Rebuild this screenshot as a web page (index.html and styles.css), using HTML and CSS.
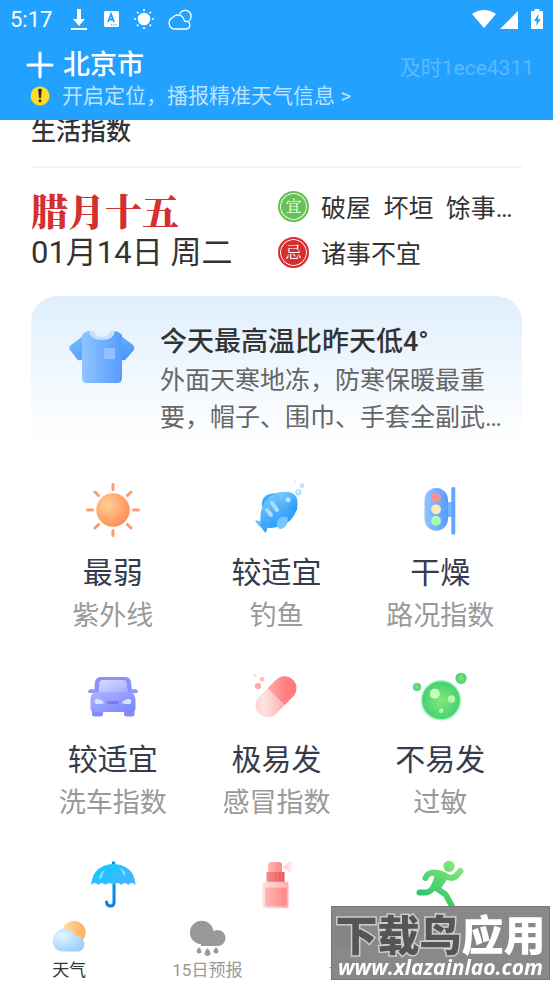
FILE: index.html
```html
<!DOCTYPE html>
<html lang="zh-CN">
<head>
<meta charset="UTF-8">
<meta name="viewport" content="width=device-width, initial-scale=1.0">
<title>北京市</title>
<link rel="stylesheet" href="styles.css">
</head>
<body>

<header class="top">
  <div class="status">
    <span class="time">5:17</span>
    <svg width="20" height="24" viewBox="0 0 20 24" fill="#fff"><path d="M8 1h4v10h4l-6 7-6-7h4zM2 20h16v2H2z"/></svg>
    <svg width="18" height="24" viewBox="0 0 18 24"><rect x="2" y="3" width="15" height="16" rx="1.500" fill="#fff"/><path d="M6 14l3-8 3 8M7 11.500h4" fill="none" stroke="#22a1ff" stroke-width="1.800"/><path d="M9 16.800h1.200m1 0h1.200m1 0h1.200" stroke="#22a1ff"/></svg>
    <svg width="22" height="24" viewBox="0 0 22 24"><circle cx="11" cy="11" r="6.300" fill="#fff"/><path d="M11 1v2M11 19v2M1 11h2M19 11h2M4 4l1.400 1.400M16.600 16.600L18 18M4 18l1.400-1.400M16.600 5.400L18 4" stroke="#fff" stroke-width="1.600"/></svg>
    <svg width="24" height="24" viewBox="0 0 24 24" fill="none" stroke="#fff" stroke-width="1.300"><path d="M6 21a6 6 0 0 1-1.500-11.300 6.500 6.500 0 0 1 11.500 2q1 3 2 1.500a4 4 0 0 1 1 7.800z"/><path d="M11.500 6.500a6 6 0 1 1 9.500 6.500"/></svg>
    <span class="space"></span>
    <svg width="24" height="24" viewBox="0 0 24 24" fill="#fff"><path d="M0 6Q12-2 24 6L12 20z"/></svg>
    <svg width="18" height="24" viewBox="0 0 18 24" fill="#fff"><path d="M18 3v18H0z"/></svg>
    <svg class="battery" width="12" height="24" viewBox="0 0 12 24"><path d="M3.500 1h5v2H11q1 0 1 1v16q0 1-1 1H1q-1 0-1-1V4q0-1 1-1h2.500z" fill="#fff"/><path d="M7.500 6L3 13h2.500v5L9.500 11H7z" fill="#22a1ff"/></svg>
  </div>
  <div class="place">
    <button class="city">
      <svg width="28" height="28" viewBox="0 0 28 28"><path d="M14 2v24M2 14h24" stroke="#fff" stroke-width="3" stroke-linecap="round"/></svg>
      北京市
    </button>
    <span class="user">及时1ece4311</span>
  </div>
  <a class="tip" href="#">
    <svg width="20" height="20" viewBox="0 0 20 20"><circle cx="10" cy="10" r="9.500" fill="#ffdc26"/><path d="M8.200 4.300a1.800 1.800 0 0 1 3.600 0L11 12H9z" fill="#333"/><circle cx="10" cy="14.800" r="1.500" fill="#333"/></svg>
    开启定位，播报精准天气信息 &gt;
  </a>
</header>

<main>
  <h1>生活指数</h1>

  <section class="almanac">
    <div>
      <div class="lunar">腊月十五</div>
      <div class="date">01月14日 周二</div>
    </div>
    <ul class="advice">
      <li><span class="seal good">宜</span>破屋&nbsp; 坏垣&nbsp; 馀事…</li>
      <li><span class="seal bad">忌</span>诸事不宜</li>
    </ul>
  </section>

  <section class="clothes">
    <svg width="66" height="56" viewBox="0 0 66 56">
      <defs>
        <linearGradient id="shirt"><stop offset="0" stop-color="#90c5ff"/><stop offset="1" stop-color="#579bff"/></linearGradient>
        <linearGradient id="sleeve" x2=".6" y2="1"><stop offset="0" stop-color="#7cc5ff"/><stop offset="1" stop-color="#4c99fc"/></linearGradient>
      </defs>
      <path d="M19 2L2 15q-3 2-1 5l7 9q1 2 4 1l6-4zM47 2l17 13q2 2 1 5l-8 9q-1 2-4 1l-6-4z" fill="url(#sleeve)"/>
      <path d="M13 5q4-4 8-4h24q4 0 8 4v43q0 5-5 5H18q-5 0-5-5z" fill="url(#shirt)"/>
      <path d="M20 1h26q-1 9-13 9T20 1z" fill="#c4defe"/>
      <path d="M24 1h18q-3 6-9 6t-9-6z" fill="#e5f1fd"/>
      <rect x="35" y="18" width="11" height="11" rx="1" fill="#8fc1ff"/>
    </svg>
    <div>
      <h2>今天最高温比昨天低4°</h2>
      <p>外面天寒地冻，防寒保暖最重要，帽子、围巾、手套全副武…</p>
    </div>
  </section>

  <section class="indexes">
    <div class="index">
      <svg width="60" height="60" viewBox="0 0 60 60">
        <defs><radialGradient id="sun" cx=".35" cy=".35" r=".7"><stop offset="0" stop-color="#ffd196"/><stop offset="1" stop-color="#ff8d55"/></radialGradient></defs>
        <circle cx="30" cy="30" r="16.700" fill="url(#sun)"/>
        <path d="M30 4.500v5M30 50.500v5M4.500 30h5M50.500 30h5M12 12l3.500 3.500M44.500 44.500L48 48M12 48l3.500-3.500M44.500 15.500L48 12" stroke="#fb9c6c" stroke-width="3" stroke-linecap="round"/>
      </svg>
      <h3>最弱</h3>
      <p>紫外线</p>
    </div>
    <div class="index">
      <svg width="60" height="60" viewBox="0 0 60 60">
        <defs>
          <linearGradient id="fish" x1=".2" x2=".8" y2="1"><stop offset="0" stop-color="#7dccfe"/><stop offset="1" stop-color="#1c91fa"/></linearGradient>
          <linearGradient id="fin" y2="1"><stop offset="0" stop-color="#7fd0ff"/><stop offset="1" stop-color="#2492f7"/></linearGradient>
        </defs>
        <path d="M16 27Q14 14 30 13l-9 11z" fill="#3ba8fb"/>
        <path d="M20 43Q14 41 9.500 40q-1 2 6 8l4 5q2-3 2-8z" fill="url(#fin)"/>
        <path d="M15 45C12 28 20 14 35 12q12-1 15 5C55 32 44 47 25 48q-8 0-10-3z" fill="url(#fish)"/>
        <path d="M33 12.300Q34 30 50.500 31q2-7 0-14-4-6-17.500-4.700z" fill="url(#fin)"/>
        <circle cx="42" cy="19.700" r="2.500" fill="#b8e7ff"/>
        <path d="M26 23l5 7M21 30l4 5" stroke="#a9dcff" stroke-width="4" stroke-linecap="round"/>
        <path d="M31 46q-1-8 5-9 6-1 6 2-1 9-7 10-3 0-4-3z" fill="#76c5fd"/>
        <circle cx="49" cy="1.800" r="1.600" fill="#dff4ff"/><circle cx="56" cy="5.500" r="2.500" fill="#bfe5ff"/><circle cx="52.300" cy="12.300" r="3.100" fill="#b1e0ff"/><circle cx="52" cy="12" r="1.200" fill="#e8f7ff"/>
      </svg>
      <h3>较适宜</h3>
      <p>钓鱼</p>
    </div>
    <div class="index">
      <svg width="60" height="60" viewBox="0 0 60 60">
        <rect x="36" y="22" width="7" height="15" fill="#77b5ff"/>
        <rect x="41.300" y="7" width="4" height="47.500" rx="1.500" fill="#62a7ff"/>
        <rect x="14.500" y="8" width="23.500" height="42.700" rx="11.700" fill="url(#shirt)"/>
        <circle cx="26" cy="17.700" r="4.900" fill="#fd8f8f"/><circle cx="26" cy="29.300" r="4.900" fill="#ffebb5"/><circle cx="26" cy="40.700" r="4.900" fill="#a6ffb0"/>
      </svg>
      <h3>干燥</h3>
      <p>路况指数</p>
    </div>
    <div class="index">
      <svg width="60" height="60" viewBox="0 0 60 60">
        <defs>
          <linearGradient id="car" x2="1" y2="1"><stop offset="0" stop-color="#aeb5ff"/><stop offset="1" stop-color="#7a83ff"/></linearGradient>
          <linearGradient id="glass" x2="1" y2="1"><stop offset="0" stop-color="#dcdfff"/><stop offset="1" stop-color="#a4abff"/></linearGradient>
        </defs>
        <path d="M9 40h11v7q0 2.500-3 2.500h-5q-3 0-3-2.500zM41 40h10.500v7q0 2.500-3 2.500h-4.500q-3 0-3-2.500z" fill="#8388fb"/>
        <path d="M11 26l1-11q1-5 6-5h24q5 0 6 5l1 11z" fill="#8a91fe"/>
        <path d="M5 25q0-3 4-3l4 1v3H6zM55 25q0-3-4-3l-4 1v3h7z" fill="#9097fd"/>
        <path d="M12 25h36q4 2 4.500 7v9q0 4-4 4h-37q-4 0-4-4v-9q0-5 4.500-7z" fill="url(#car)"/>
        <path d="M15.500 25l1-9q.500-3 3.500-3h20q3 0 3.500 3l1.500 9z" fill="url(#glass)"/>
        <path d="M12.500 32q7 0 8.500 4 0 1-8 1-2-2-.500-5zM47.500 32q-7 0-8.500 4 0 1 8 1 2-2 .500-5z" fill="#dde0ff"/>
        <rect x="24" y="34" width="12" height="3" rx="1.500" fill="#747cf5"/>
      </svg>
      <h3>较适宜</h3>
      <p>洗车指数</p>
    </div>
    <div class="index">
      <svg width="60" height="60" viewBox="0 0 60 60">
        <defs>
          <linearGradient id="cap" y2="1"><stop offset="0" stop-color="#ffafaf"/><stop offset=".5" stop-color="#ff8282"/><stop offset="1" stop-color="#ff7575"/></linearGradient>
          <linearGradient id="half" y2="1"><stop offset="0" stop-color="#ffcfcf"/><stop offset=".4" stop-color="#ffe2e2"/><stop offset="1" stop-color="#fcb0b0"/></linearGradient>
        </defs>
        <g transform="rotate(-45 30 29.700)">
          <path d="M30 17.700H18a12 12 0 0 0 0 24h12z" fill="url(#half)"/>
          <path d="M30 17.700h12a12 12 0 0 1 0 24H30z" fill="url(#cap)"/>
        </g>
        <circle cx="9" cy="8.500" r="1.600" fill="#ffd4d4"/><circle cx="16" cy="12.300" r="2.400" fill="#ffbcbc"/><circle cx="12" cy="19" r="3.100" fill="#ffaaaa"/>
      </svg>
      <h3>极易发</h3>
      <p>感冒指数</p>
    </div>
    <div class="index">
      <svg width="60" height="60" viewBox="0 0 60 60">
        <defs><radialGradient id="germ"><stop offset="0" stop-color="#85e77a"/><stop offset="1" stop-color="#43d172"/></radialGradient></defs>
        <circle cx="31" cy="33.300" r="19.500" fill="url(#germ)" stroke="#a7f5c0" stroke-width="1.500"/>
        <circle cx="7" cy="20" r="4.100" fill="url(#germ)"/><circle cx="51" cy="11.300" r="5.600" fill="url(#germ)"/>
        <circle cx="24.800" cy="26.700" r="5" fill="#c9ffb9"/><circle cx="41.500" cy="32" r="3.700" fill="#b5fbae"/><circle cx="31.200" cy="43.700" r="2.200" fill="#b9fbb2"/>
      </svg>
      <h3>不易发</h3>
      <p>过敏</p>
    </div>
    <div class="index">
      <svg width="60" height="60" viewBox="0 0 60 60">
        <defs><linearGradient id="umbrella" y2="1"><stop offset="0" stop-color="#08ceff"/><stop offset="1" stop-color="#4fb0ff"/></linearGradient></defs>
        <circle cx="30.500" cy="9" r="1.800" fill="#168be3"/>
        <path d="M31 29v19q0 4-3.500 4t-4-4" fill="none" stroke="#097cda" stroke-width="3" stroke-linecap="round"/>
        <path d="M29.800 30v17q0 3-2 3.500" fill="none" stroke="#6cc8fb"/>
        <path d="M8 31Q10 11 30.300 10 51 11 52.700 31q-4-4-7.500 0-3.500-4-7 0-3.500-4-8 0-4-4-7.500 0-4-4-7.500 0-3.500-4-7.200 0z" fill="url(#umbrella)"/>
        <path d="M16 25q1-7 6-9-3 4-3 8zM37 14q6 3 5 8-1 0-5-8z" fill="#8be2ff"/>
      </svg>
    </div>
    <div class="index">
      <svg width="60" height="60" viewBox="0 0 60 60">
        <defs>
          <linearGradient id="bottle"><stop offset="0" stop-color="#ffe1e1"/><stop offset="1" stop-color="#ffb0b0"/></linearGradient>
          <linearGradient id="label"><stop offset="0" stop-color="#ffb6b6"/><stop offset="1" stop-color="#ff8787"/></linearGradient>
          <linearGradient id="neck"><stop offset="0" stop-color="#f58d8d"/><stop offset="1" stop-color="#e35555"/></linearGradient>
          <linearGradient id="spray"><stop offset="0" stop-color="#ffbcbc"/><stop offset="1" stop-color="#fff3f3"/></linearGradient>
        </defs>
        <path d="M37 13l9-7.500v14.500z" fill="url(#spray)"/>
        <path d="M22 18v-7q0-3 3-3h8q3 0 3 3v7z" fill="url(#label)"/>
        <rect x="20.500" y="18" width="18" height="10" fill="url(#neck)"/>
        <path d="M23.500 18v10M27.500 18v10M31.500 18v10M35.500 18v10" stroke="#f08080"/>
        <rect x="16.500" y="27.700" width="26" height="26.500" rx="2" fill="url(#bottle)"/>
        <rect x="19" y="33.700" width="21.500" height="18.500" fill="url(#label)"/>
      </svg>
    </div>
    <div class="index">
      <svg width="60" height="60" viewBox="0 0 60 60">
        <defs><linearGradient id="run" gradientUnits="userSpaceOnUse" x1="45" y1="10" x2="20" y2="50"><stop offset="0" stop-color="#83e879"/><stop offset="1" stop-color="#2bc46c"/></linearGradient></defs>
        <circle cx="39" cy="12.300" r="5.600" fill="url(#run)"/>
        <g fill="none" stroke="url(#run)" stroke-width="6" stroke-linecap="round" stroke-linejoin="round">
          <path d="M15.500 24q2-5 8-5.500 7 0 12 3.500 7 4 11-.500l4-4.500"/>
          <path d="M28 23l-4 9q-3 6-8 6.500H9.500"/>
          <path d="M26 34l9 6q2 2 3 5l3.500 6"/>
        </g>
        <path d="M25 18l13 6-8 12-8-2z" fill="url(#run)"/>
      </svg>
    </div>
  </section>
</main>

<nav class="tabs">
  <a class="tab active" href="#">
    <svg width="40" height="40" viewBox="0 0 40 40">
      <defs>
        <linearGradient id="tabsun" x2="1"><stop offset="0" stop-color="#ffe0a0"/><stop offset="1" stop-color="#ffae63"/></linearGradient>
        <radialGradient id="tabcloud" cx=".3" cy=".3" r=".8"><stop offset="0" stop-color="#e4f4ff"/><stop offset="1" stop-color="#98ceff"/></radialGradient>
      </defs>
      <circle cx="25" cy="16.500" r="11.600" fill="url(#tabsun)"/>
      <path d="M13 35.500A10 10 0 0 1 4 23a11.500 11.500 0 0 1 22-3 6 6 0 0 1 5 1.500 7.500 7.500 0 0 1-1 14z" fill="url(#tabcloud)"/>
    </svg>
    天气
  </a>
  <a class="tab" href="#">
    <svg width="40" height="40" viewBox="0 0 40 40" fill="#999">
      <circle cx="14.700" cy="16.500" r="11.800"/><circle cx="30.500" cy="22" r="8"/><path d="M14 18h17v12H14z"/>
      <path d="M12 31q5 6 0 6.500-5-.500 0-6.500zM20.500 32q6 7 0 8-6-1 0-8zM29 31q5 6 0 6.500-5-.500 0-6.500z"/>
    </svg>
    15日预报
  </a>
  <a class="tab" href="#">
    <svg width="40" height="40" viewBox="0 0 40 40" fill="#999"><circle cx="20" cy="19" r="15"/></svg>
    计划
  </a>
  <a class="tab" href="#">
    <svg width="40" height="40" viewBox="0 0 40 40" fill="#999"><circle cx="20" cy="19" r="15"/></svg>
    我的
  </a>
</nav>

<div class="watermark">
  <div class="mark-name"><span>下载鸟</span>应用</div>
  <div class="mark-url">www.xlazainlao.com</div>
</div>

</body>
</html>
```

FILE: styles.css
```css
* {
  box-sizing: border-box;
}

body {
  margin: 0;
  font-family: Roboto, "Noto Sans CJK SC", sans-serif;
  background-color: #fff;
  color: #333;
}

h1, h2, h3, p, ul {
  margin: 0;
  padding: 0;
  font-weight: 400;
}

svg {
  display: block;
  flex-shrink: 0;
}

/* Header */
.top {
  position: sticky;
  top: 0;
  z-index: 2;
  height: 120px;
  background-color: #22a1ff;
  color: #fff;
}

.status {
  display: flex;
  align-items: center;
  gap: 13px;
  height: 40px;
  padding: 0 10px;
}

.status .time {
  margin-right: 4px;
  font-size: 22px;
  line-height: 38px;
}

.status .space {
  flex: 1;
}

.status .space ~ svg {
  margin-left: -9px;
}

.status .space ~ .battery {
  margin-left: 0;
}

.place {
  display: flex;
  justify-content: space-between;
  align-items: center;
  height: 46px;
  padding: 4px 19px 0 26px;
}

.city {
  display: flex;
  align-items: center;
  gap: 9px;
  padding: 0;
  border: none;
  background: none;
  color: #fff;
  font-family: inherit;
  font-size: 27px;
  font-weight: 500;
  line-height: 40px;
}

.user {
  padding-top: 6px;
  font-size: 21px;
  line-height: 30px;
  color: #5db9ff;
}

.tip {
  display: flex;
  align-items: center;
  gap: 12px;
  padding-left: 30px;
  font-size: 21px;
  line-height: 20px;
  color: #bde2ff;
  text-decoration: none;
}

/* Content */
main {
  padding: 0 31px;
}

h1 {
  margin-top: -6px;
  padding-bottom: 16px;
  border-bottom: 2px solid #f4f4f4;
  font-size: 25px;
  font-weight: 500;
  line-height: 36px;
}

.almanac {
  display: flex;
  height: 128px;
  padding-top: 15px;
}

.almanac > div {
  width: 247px;
  padding-top: 4px;
}

.lunar {
  font-family: "Noto Serif CJK SC", "Noto Sans CJK SC", serif;
  font-size: 37px;
  font-weight: 900;
  line-height: 46px;
  color: #d52f2f;
}

.date {
  font-size: 31px;
  line-height: 40px;
}

.advice {
  list-style: none;
  font-size: 25px;
  white-space: nowrap;
}

.advice li {
  display: flex;
  align-items: center;
  gap: 12px;
  height: 46px;
}

.seal {
  width: 31px;
  height: 31px;
  border: 2px solid;
  border-radius: 50%;
  box-shadow: inset 0 0 0 1px #fff;
  font-family: "Noto Serif CJK SC", "Noto Sans CJK SC", serif;
  font-size: 16px;
  line-height: 26px;
  text-align: center;
  color: #fff;
}

.good {
  border-color: #66c255;
  background-color: #66c255;
}

.bad {
  border-color: #d52f2f;
  background-color: #d52f2f;
}

.clothes {
  display: flex;
  gap: 25px;
  padding: 26px 16px 8px 38px;
  border-radius: 26px 26px 0 0;
  background: linear-gradient(#e0effd, #fff);
}

.clothes svg {
  margin-top: 8px;
}

.clothes h2 {
  font-size: 27px;
  font-weight: 500;
  line-height: 40px;
}

.clothes p {
  font-size: 25px;
  line-height: 37px;
  color: #666;
}

.indexes {
  display: grid;
  grid-template-columns: repeat(3, 1fr);
  row-gap: 43px;
  padding-top: 36px;
}

.index {
  display: flex;
  flex-direction: column;
  align-items: center;
}

.index h3 {
  margin-top: 12px;
  font-size: 30px;
  line-height: 42px;
  color: #363b4b;
}

.index p {
  height: 30px;
  font-size: 27px;
  line-height: 44px;
  color: #999;
}

/* Bottom tabs */
.tabs {
  position: sticky;
  bottom: 0;
  display: flex;
  height: 70px;
  background-color: #fff;
}

.tab {
  display: flex;
  flex: 1;
  flex-direction: column;
  align-items: center;
  padding-top: 2px;
  font-size: 17px;
  line-height: 28px;
  color: #999;
  text-decoration: none;
}

.tab.active {
  color: #333;
}

/* Site mark over the bottom right corner */
.watermark {
  position: fixed;
  right: 3px;
  bottom: 4px;
  z-index: 3;
  width: 219px;
  height: 74px;
  border: 1px solid #777;
  background-color: rgba(132, 132, 132, 0.96);
  color: #fff;
  text-align: center;
  white-space: nowrap;
}

.mark-name {
  padding-top: 4px;
  font-family: "Noto Sans CJK SC", sans-serif;
  font-size: 42px;
  font-weight: 900;
  line-height: 44px;
}

.mark-name span {
  color: #555;
  -webkit-text-stroke: 3px #ccc;
  paint-order: stroke fill;
}

.mark-url {
  font-family: "Open Sans", sans-serif;
  font-size: 21px;
  font-style: italic;
  font-weight: 700;
  line-height: 24px;
}
```
